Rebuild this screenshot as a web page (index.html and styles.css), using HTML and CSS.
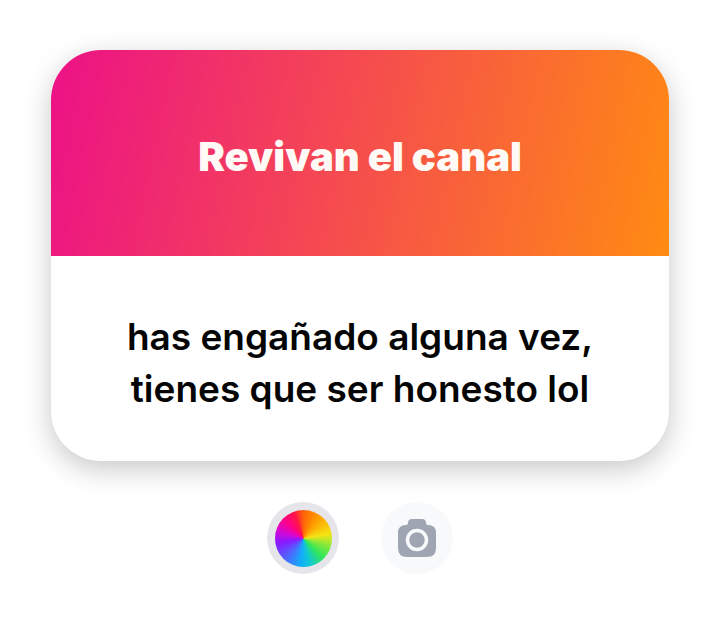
FILE: index.html
```html
<!DOCTYPE html>
<html lang="es">
<head>
<meta charset="utf-8">
<meta name="viewport" content="width=device-width, initial-scale=1">
<title>Revivan el canal</title>
<link rel="stylesheet" href="styles.css">
</head>
<body>
<main class="page">
  <article class="card">
    <header class="card-header"><h1 class="title">Revivan el canal</h1></header>
    <p class="message">has engañado alguna vez,<br>tienes que ser honesto lol</p>
  </article>
  <div class="tools">
    <button class="tool color-tool" type="button" aria-label="Color"><span class="wheel"></span></button>
    <button class="tool camera-tool" type="button" aria-label="Cámara">
      <svg class="camera" viewBox="0 0 38 38" aria-hidden="true">
        <path fill="#9fa6b1" d="M14 0h10q4 0 4 4 0 2 2 2 8 0 8 8v15q0 9-9 9H9q-9 0-9-9V14q0-8 8-8 2 0 2-2 0-4 4-4z"/>
        <circle cx="19" cy="21" r="9.500" fill="none" stroke="#f7f9fb" stroke-width="3.500"/>
      </svg>
    </button>
  </div>
</main>
</body>
</html>
```
FILE: styles.css
```css
* { box-sizing: border-box; }
body { margin: 0; background: #fff; color: #050505; font-family: Inter, "Liberation Sans", sans-serif; }
.page { padding: 50px 51px; }
.card { overflow: hidden; border-radius: 50px; background: #fff; box-shadow: 0 8px 28px rgba(0, 0, 0, .22); }
.card-header { padding: 81px 24px 73px; background: linear-gradient(102deg, #ec1187, #ff8b12); text-align: center; }
.title { margin: 0; color: #fffaf5; font-size: 40px; line-height: 52px; font-weight: 900; }
.message { margin: 0; padding: 55px 24px 46px; text-align: center; font-size: 37px; line-height: 52px; font-weight: 600; }
.tools { display: flex; justify-content: center; gap: 42px; padding-top: 41px; }
.tool { display: grid; place-items: center; width: 72px; height: 72px; padding: 0; border: 0; border-radius: 50%; background: #f7f9fb; }
.color-tool { background: #e6e6ea; }
.wheel { width: 57px; height: 57px; border-radius: 50%; background: conic-gradient(#ff6508, #ff9c00 35deg, #f4e414 80deg, #8be83a 105deg, #30e65a 135deg, #12c8d0 165deg, #10b0f8 185deg, #4c68ff 220deg, #8a18ff 260deg, #d008d8 285deg, #ff0088 315deg, #ff1448 340deg, #ff6508); }
.camera { width: 38px; height: 38px; }
```
